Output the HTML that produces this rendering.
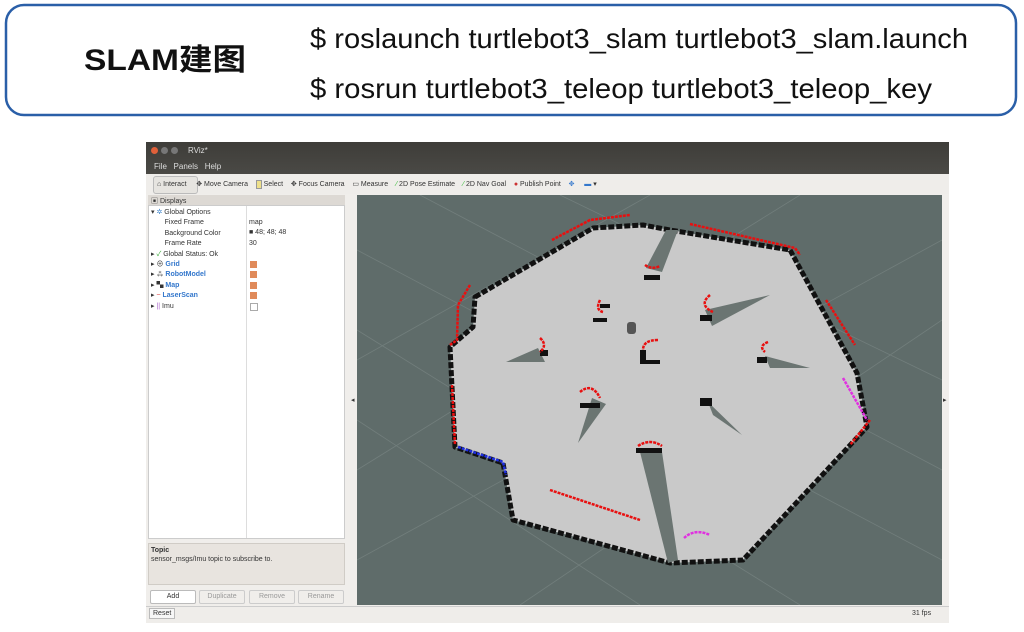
<!DOCTYPE html>
<html><head><meta charset="utf-8"><style>
body{margin:0;width:1024px;height:632px;background:#fff;position:relative;overflow:hidden;font-family:"Liberation Sans","Noto Sans CJK SC",sans-serif}
.abs{position:absolute}
.t{font-size:7px;color:#333;white-space:nowrap}
</style></head><body>
<svg class="abs" style="left:0;top:0" width="1024" height="125">
<rect x="6" y="5" width="1010" height="110" rx="18" fill="#fff" stroke="#2a5fa8" stroke-width="2.5"/>
<text x="84" y="70" font-size="30" font-weight="bold" font-family="Liberation Sans Narrow, Liberation Sans, Noto Sans CJK SC, sans-serif" textLength="162" lengthAdjust="spacingAndGlyphs" fill="#111">SLAM建图</text>
<text x="310" y="48" font-size="28" font-family="Liberation Sans Narrow, Liberation Sans, sans-serif" textLength="658" lengthAdjust="spacingAndGlyphs" fill="#111">$ roslaunch turtlebot3_slam turtlebot3_slam.launch</text>
<text x="310" y="98" font-size="28" font-family="Liberation Sans Narrow, Liberation Sans, sans-serif" textLength="622" lengthAdjust="spacingAndGlyphs" fill="#111">$ rosrun turtlebot3_teleop turtlebot3_teleop_key</text>
</svg>
<div class="abs" style="left:146px;top:142px;width:803px;height:480px;background:#f0eeeb"></div>
<div class="abs" style="left:146px;top:142px;width:803px;height:32px;background:linear-gradient(#3e3d39,#4a4945)"></div>
<div class="abs" style="left:151px;top:147px;width:7px;height:7px;border-radius:50%;background:#e0603a"></div>
<div class="abs" style="left:161px;top:147px;width:7px;height:7px;border-radius:50%;background:#777"></div>
<div class="abs" style="left:171px;top:147px;width:7px;height:7px;border-radius:50%;background:#777"></div>
<div class="abs t" style="left:188px;top:146px;color:#ddd;font-size:8px">RViz*</div>
<div class="abs t" style="left:154px;top:162px;color:#ddd;font-size:8px">File &nbsp; Panels &nbsp; Help</div>
<div class="abs" style="left:146px;top:174px;width:803px;height:20px;background:#efedea"></div>
<div class="abs" style="left:153px;top:176px;width:43px;height:16px;border:1px solid #bbb;border-radius:3px;background:#e6e4e0"></div>
<div class="abs t" style="left:157px;top:180px">⌂ Interact &nbsp;&nbsp;&nbsp; ✥ Move Camera &nbsp;&nbsp; <span style="background:#eee08a;border:1px solid #999">&nbsp;&nbsp;</span> Select &nbsp;&nbsp; ✥ Focus Camera &nbsp;&nbsp; ▭ Measure &nbsp;&nbsp; <span style="color:#3b3">⁄</span> 2D Pose Estimate &nbsp;&nbsp; <span style="color:#3b3">⁄</span> 2D Nav Goal &nbsp;&nbsp; <span style="color:#c33">●</span> Publish Point &nbsp;&nbsp; <span style="color:#37c">✥</span> &nbsp;&nbsp;&nbsp; <span style="color:#37c">▬</span> ▾</div>
<div class="abs" style="left:148px;top:195px;width:197px;height:10px;background:#ddd9d4"></div>
<div class="abs t" style="left:151px;top:196px">▣ Displays</div>
<div class="abs" style="left:148px;top:205px;width:197px;height:334px;background:#fff;border:1px solid #ccc;box-sizing:border-box"></div>
<div class="abs" style="left:246px;top:206px;width:1px;height:332px;background:#ddd"></div>
<div class="abs t" style="left:151px;top:208px;line-height:10.4px">
▾ <span style="color:#48c">✲</span> Global Options<br>
&nbsp;&nbsp;&nbsp;&nbsp;&nbsp;&nbsp;&nbsp;Fixed Frame<br>
&nbsp;&nbsp;&nbsp;&nbsp;&nbsp;&nbsp;&nbsp;Background Color<br>
&nbsp;&nbsp;&nbsp;&nbsp;&nbsp;&nbsp;&nbsp;Frame Rate<br>
▸ <span style="color:#3a3">✓</span> Global Status: Ok<br>
▸ ⊕ <b style="color:#37c">Grid</b><br>
▸ ⁂ <b style="color:#37c">RobotModel</b><br>
▸ ▚ <b style="color:#37c">Map</b><br>
▸ <span style="color:#d33">~</span> <b style="color:#37c">LaserScan</b><br>
▸ <span style="color:#a6c">||</span> Imu</div>
<div class="abs t" style="left:249px;top:218px;line-height:10.4px">map<br>■ 48; 48; 48<br>30</div>
<div class="abs" style="left:250px;top:261px;line-height:0">
<div style="width:7px;height:7px;background:#e08a5a;margin-bottom:3.4px"></div><div style="width:7px;height:7px;background:#e08a5a;margin-bottom:3.4px"></div><div style="width:7px;height:7px;background:#e08a5a;margin-bottom:3.4px"></div><div style="width:7px;height:7px;background:#e08a5a;margin-bottom:3.4px"></div><div style="width:6px;height:6px;border:1px solid #aaa;background:#fff"></div></div>
<div class="abs" style="left:148px;top:543px;width:197px;height:42px;background:#e8e4df;border:1px solid #d0ccc6;box-sizing:border-box"></div>
<div class="abs t" style="left:151px;top:546px;line-height:9px"><b>Topic</b><br>sensor_msgs/Imu topic to subscribe to.</div>
<div class="abs t" style="left:150px;top:590px;width:44px;height:12px;border:1px solid #bbb;border-radius:2px;background:#fff;text-align:center;line-height:12px">Add</div>
<div class="abs t" style="left:199px;top:590px;width:44px;height:12px;border:1px solid #ccc;border-radius:2px;text-align:center;line-height:12px;color:#999">Duplicate</div>
<div class="abs t" style="left:249px;top:590px;width:44px;height:12px;border:1px solid #ccc;border-radius:2px;text-align:center;line-height:12px;color:#999">Remove</div>
<div class="abs t" style="left:298px;top:590px;width:44px;height:12px;border:1px solid #ccc;border-radius:2px;text-align:center;line-height:12px;color:#999">Rename</div>
<div class="abs" style="left:146px;top:606px;width:803px;height:16px;background:#efedea;border-top:1px solid #ccc"></div>
<div class="abs t" style="left:149px;top:608px;border:1px solid #bbb;padding:1px 3px;background:#f7f7f7">Reset</div>
<div class="abs t" style="left:912px;top:610px">31 fps</div>
<svg class="abs" style="left:357px;top:195px" width="585" height="410" viewBox="357 195 585 410">
<rect x="357" y="195" width="585" height="410" fill="#5f6c6a"/>
<g stroke="#7a8684" stroke-width="0.8" opacity="0.7">
<line x1="357" y1="250" x2="942" y2="560"/><line x1="357" y1="330" x2="800" y2="605"/><line x1="357" y1="420" x2="640" y2="605"/>
<line x1="420" y1="195" x2="942" y2="470"/><line x1="560" y1="195" x2="942" y2="380"/>
<line x1="942" y1="240" x2="357" y2="560"/><line x1="942" y1="320" x2="520" y2="605"/><line x1="800" y1="195" x2="357" y2="470"/><line x1="650" y1="195" x2="357" y2="360"/>
</g>
<polygon points="475,297 593,228 643,225 670,230 790,250 857,373 867,427 743,560 670,563 513,520 503,463 455,447 450,347 473,327" fill="#c9c9c9" stroke="#111" stroke-width="5" stroke-dasharray="6 2" stroke-linejoin="round"/>
<g fill="#6b7572">
<polygon points="666,230 678,230 662,272 646,268"/>
<polygon points="705,310 770,295 712,326"/>
<polygon points="506,362 538,348 545,362"/>
<polygon points="765,356 810,368 770,368"/>
<polygon points="592,398 606,404 578,443"/>
<polygon points="708,402 742,435 713,415"/>
<polygon points="640,452 662,452 678,560 668,563"/>
</g>
<g fill="#111">
<rect x="644" y="275" width="16" height="5"/><rect x="593" y="318" width="14" height="4"/><rect x="600" y="304" width="10" height="4"/>
<rect x="700" y="315" width="12" height="6"/><rect x="540" y="350" width="8" height="6"/>
<rect x="640" y="350" width="6" height="12"/><rect x="640" y="360" width="20" height="4"/>
<rect x="757" y="357" width="10" height="6"/><rect x="580" y="403" width="20" height="5"/>
<rect x="700" y="398" width="12" height="8"/><rect x="636" y="448" width="26" height="5"/>
</g>
<g fill="none" stroke="#e81010" stroke-width="2.5" stroke-dasharray="3 1">
<path d="M552,240 L590,220 L630,215"/><path d="M690,224 L795,248 L800,255"/>
<path d="M826,300 L855,345"/><path d="M470,285 L458,305 L457,340 L450,345"/>
<path d="M452,385 L455,445"/><path d="M550,490 L640,520"/>
<path d="M645,265 Q652,270 660,266"/><path d="M600,300 Q595,310 603,312"/>
<path d="M710,295 Q698,305 713,312"/><path d="M540,338 Q548,345 540,352"/>
<path d="M658,340 Q643,340 643,350"/><path d="M768,342 Q758,346 765,352"/>
<path d="M580,392 Q592,382 600,398"/><path d="M638,446 Q650,438 662,446"/>
<path d="M870,420 L850,445"/>
</g>
<path d="M458,447 L503,462 L506,475" fill="none" stroke="#2030e0" stroke-width="2.5" stroke-dasharray="3 1"/>
<path d="M843,378 L867,420" fill="none" stroke="#e030e0" stroke-width="2.5" stroke-dasharray="3 1"/>
<path d="M684,538 Q695,528 710,535" fill="none" stroke="#e030e0" stroke-width="2.5" stroke-dasharray="3 1"/>
<rect x="627" y="322" width="9" height="12" rx="3" fill="#555"/>
</svg>
<div class="abs t" style="left:351px;top:396px">◂</div>
<div class="abs t" style="left:943px;top:396px">▸</div>
</body></html>
